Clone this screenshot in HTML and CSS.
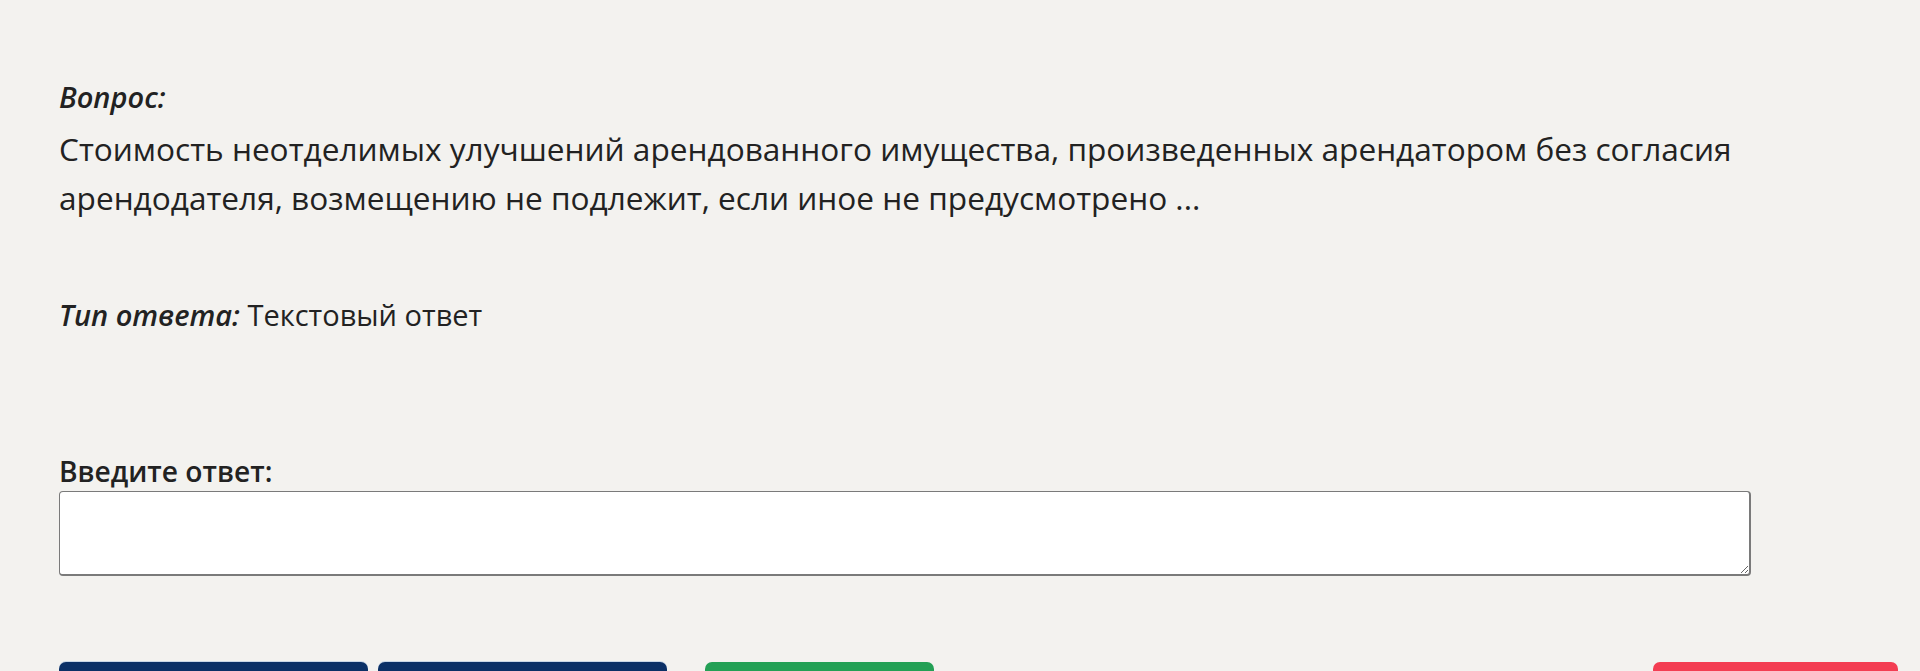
FILE: index.html
```html
<!DOCTYPE html>
<html lang="ru">
<head>
<meta charset="utf-8">
<title>Вопрос</title>
<link rel="stylesheet" href="styles.css">
</head>
<body>
<main class="page">
  <section class="question">
    <div class="q-label">Вопрос:</div>
    <p class="q-text">Стоимость неотделимых улучшений арендованного имущества, произведенных арендатором без согласия арендодателя, возмещению не подлежит, если иное не предусмотрено ...</p>
  </section>
  <p class="answer-type"><em class="at-label">Тип ответа:</em> Текстовый ответ</p>
  <label class="answer-label" for="answer">Введите ответ:</label>
  <textarea id="answer" class="answer-input"></textarea>
  <div class="actions">
    <div class="actions-left">
      <button class="btn btn-primary btn-w1" type="button">Предыдущий</button>
      <button class="btn btn-primary btn-w2" type="button">Следующий</button>
      <button class="btn btn-success btn-w3" type="button">Ответить</button>
    </div>
    <button class="btn btn-danger btn-w4" type="button">Завершить тест</button>
  </div>
</main>
</body>
</html>
```
FILE: styles.css
```css
html, body {
  margin: 0;
  padding: 0;
  background: #f3f2ef;
}

body {
  font-family: "Open Sans", "Noto Sans", "DejaVu Sans", sans-serif;
  color: #222222;
  font-size: 29px;
}

.page {
  padding: 73px 22px 0 59px;
}

.question {
  margin: 0;
}

.q-label {
  font-style: italic;
  font-weight: 600;
  line-height: 48px;
}

.q-text {
  max-width: 1780px;
  margin: 3px 0 0;
  font-size: 31.6px;
  line-height: 49px;
}

.answer-type {
  margin: 69px 0 0;
  line-height: 48px;
}

.at-label {
  font-style: italic;
  font-weight: 600;
}

.answer-label {
  display: block;
  margin-top: 114px;
  font-weight: 600;
  font-size: 28.2px;
  line-height: 36px;
}

.answer-input {
  display: block;
  box-sizing: border-box;
  width: 1692px;
  height: 85px;
  margin: 2px 0 0;
  padding: 4px 8px;
  background: #ffffff;
  border-style: solid;
  border-color: #7a7a7a;
  border-width: 1px 2px 2px 1px;
  border-radius: 4px;
  font: inherit;
  resize: vertical;
}

.actions {
  display: flex;
  justify-content: space-between;
  align-items: flex-start;
  margin-top: 86px;
}

.actions-left {
  display: flex;
  gap: 10px;
}

.btn {
  box-sizing: border-box;
  height: 56px;
  border: none;
  border-radius: 7px;
  padding: 16px 16px;
  color: #ffffff;
  font: inherit;
  font-size: 22px;
  line-height: 24px;
}

.btn-primary {
  background: #0b3066;
  box-shadow: 0 -1px 0 #c9d6e6;
}

.btn-success {
  background: #23a055;
  margin-left: 28px;
}

.btn-danger {
  background: #f33d52;
}

.btn-w1 { width: 309px; }
.btn-w2 { width: 289px; }
.btn-w3 { width: 229px; }
.btn-w4 { width: 245px; }
```
